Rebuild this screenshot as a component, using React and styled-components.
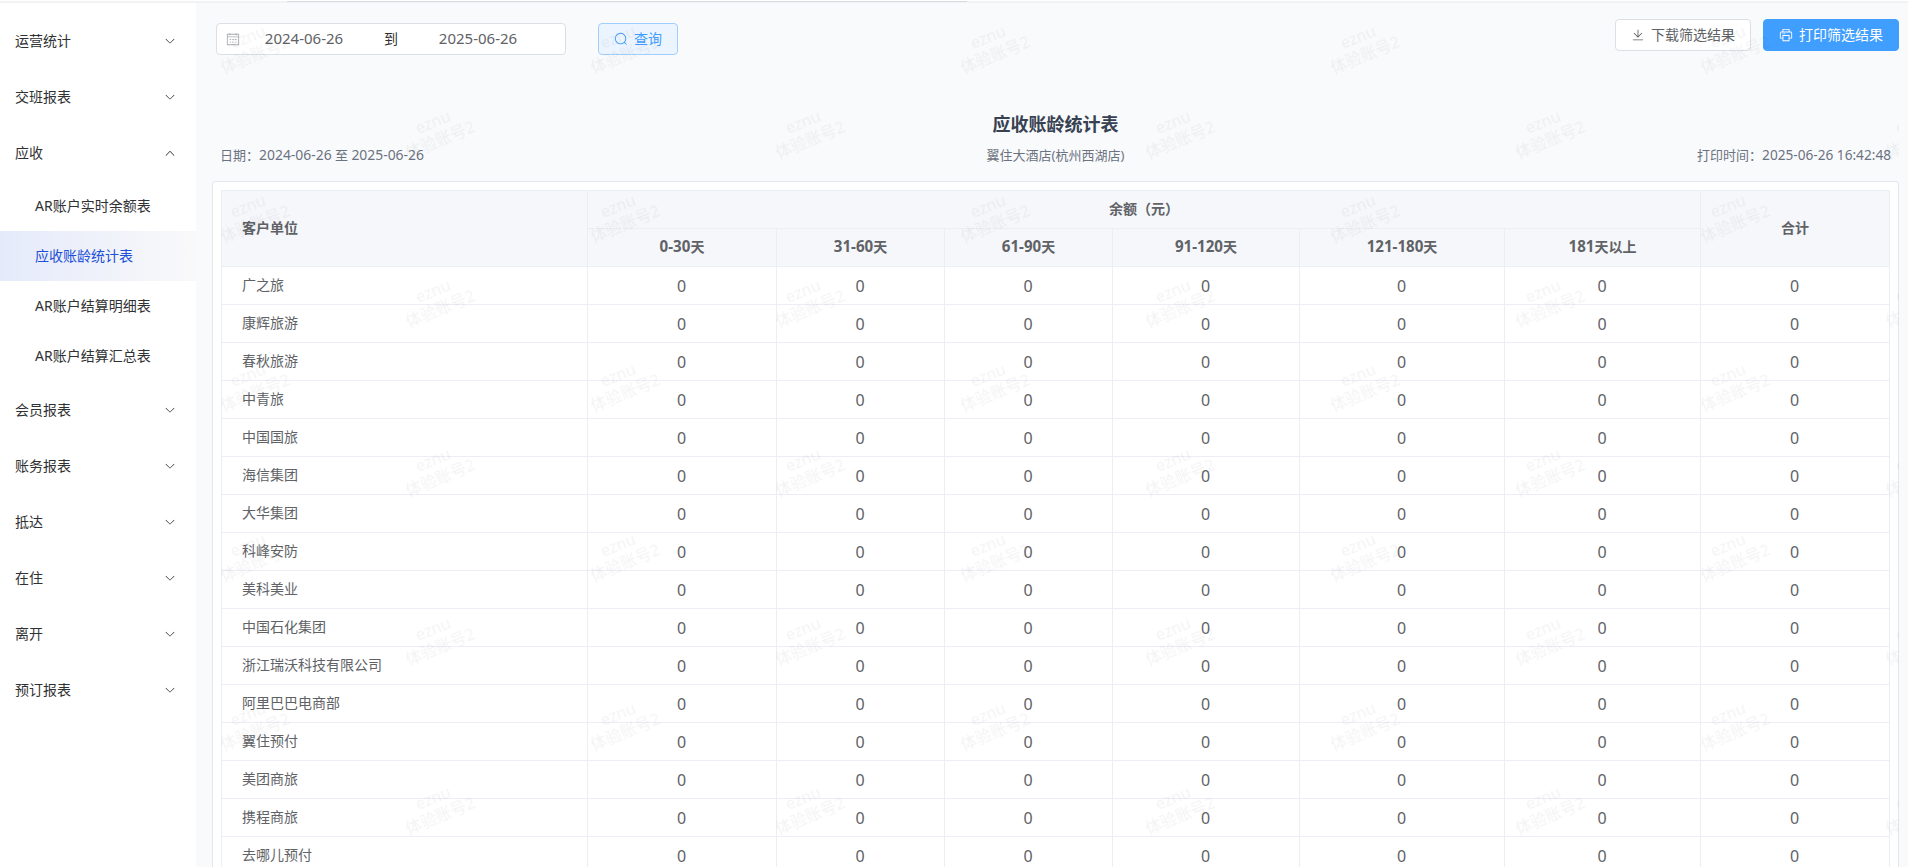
import React from 'react';
import styled, { createGlobalStyle } from 'styled-components';

const GlobalStyle = createGlobalStyle`
  * { box-sizing: border-box; }
  body { margin: 0; background: #f9fafc; overflow: hidden; font-family: 'Noto Sans', 'Noto Sans CJK SC', sans-serif; font-size: 14px; color: #303133; }
  button { font-family: inherit; }
`;

const TopStrip = styled.div` height: 3px; padding: 1px 0 0 287px; background: linear-gradient(#ffffff 1px, #f2f3f5 1px); `;
const ScrollThumb = styled.div` width: 680px; height: 1px; background: #d9dbe0; `;
const Layout = styled.div` display: flex; height: 864px; `;

const Sidebar = styled.nav` width: 196px; flex-shrink: 0; background: #fff; padding-top: 10px; `;
const MenuTitle = styled.div` display: flex; align-items: center; justify-content: space-between; height: 56px; padding: 0 20px 0 15px; color: #303133; `;
const MenuName = styled.span` padding-bottom: 2px; `;
const SubMenu = styled.div` padding-bottom: 1px; `;
const MenuItem = styled.div`
  height: 50px; line-height: 50px; padding-left: 35px;
  color: ${p => p.$active ? '#1d4fd8' : '#303133'};
  background: ${p => p.$active ? 'linear-gradient(90deg, #e5eafb, #f9f9f9)' : 'none'};
`;

const Main = styled.main` position: relative; flex: 1; min-width: 0; padding: 16px 9px 0 16px; display: flex; flex-direction: column; overflow: hidden; `;
const Toolbar = styled.div` display: flex; align-items: flex-start; height: 84px; padding-left: 4px; `;
const DateRange = styled.div` display: flex; align-items: center; width: 350px; height: 32px; margin: 4px 32px 0 0; padding: 0 18px 0 9px; background: #fff; border: 1px solid #dcdfe6; border-radius: 4px; color: #606266; `;
const DateValue = styled.span` width: ${p => p.$width}px; padding: 0 0 2px; text-align: center; font-size: 15px; `;
const DateSeparator = styled.span` flex: 1; padding: 0 0 2px 5px; text-align: center; color: #303133; `;
const Button = styled.button`
  display: flex; align-items: center; justify-content: center; gap: 6px;
  width: ${p => p.$width}px; height: 32px; margin-top: ${p => p.$top || 0}px; padding: 0; border-radius: 4px; font-size: 14px;
  color: ${p => p.$color || '#606266'}; background: ${p => p.$bg || '#fff'}; border: 1px solid ${p => p.$border || '#dcdfe6'};
`;
const ButtonText = styled.span` padding-bottom: 2px; `;
const Actions = styled.div` display: flex; gap: 12px; margin-left: auto; `;

const Title = styled.h1` margin: 8px 0 0; height: 26px; line-height: 26px; text-align: center; font-size: 18px; font-weight: 700; color: #374151; `;
const Meta = styled.div` display: grid; grid-template-columns: 1fr auto 1fr; height: 44px; padding: 8px 8px 0 8px; line-height: 20px; font-size: 13px; color: #6b7280; `;
const PrintTime = styled.span` text-align: right; `;
const Num = styled.span` font-size: ${p => p.$scale || 1.07}em; line-height: 1; `;
const Card = styled.section` flex: 1; min-height: 0; padding: 8px; background: #fff; border: 1px solid #e4e7ed; border-bottom: 0; border-radius: 4px 4px 0 0; overflow: hidden; `;

const Table = styled.table` width: 1669px; table-layout: fixed; border-collapse: separate; border-spacing: 0; border-top: 1px solid #ebeef5; border-left: 1px solid #ebeef5; color: #606266; `;
const Cell = styled.td` height: 38px; padding: 0 20px 2px; text-align: ${p => p.$left ? 'left' : 'center'}; line-height: 22px; border-right: 1px solid #ebeef5; border-bottom: 1px solid #ebeef5; `;
const HeadCell = styled(Cell)` background: #f5f7fb; font-weight: 700; `;
const AmountCell = styled(Cell)` padding: 0 21px 0 20px; font-size: 16px; `;

const WatermarkLayer = styled.div` position: absolute; top: 0; bottom: 0; left: 16px; right: 9px; overflow: hidden; pointer-events: none; `;
const Watermark = styled.div` position: absolute; width: 100px; height: 40px; text-align: center; font-size: 16px; font-weight: 500; line-height: 19px; color: rgba(0, 0, 0, 0.042); transform: rotate(-22deg); will-change: transform; `;

const menus = [
  { name: '运营统计' },
  { name: '交班报表' },
  { name: '应收', children: ['AR账户实时余额表', '应收账龄统计表', 'AR账户结算明细表', 'AR账户结算汇总表'] },
  { name: '会员报表' },
  { name: '账务报表' },
  { name: '抵达' },
  { name: '在住' },
  { name: '离开' },
  { name: '预订报表' },
];
const ranges = [['0-30', '天'], ['31-60', '天'], ['61-90', '天'], ['91-120', '天'], ['121-180', '天'], ['181', '天以上']];
const columnWidths = [366, 189, 168, 168, 187, 205, 196, 189];
const customers = ['广之旅', '康辉旅游', '春秋旅游', '中青旅', '中国国旅', '海信集团', '大华集团', '科峰安防', '美科美业', '中国石化集团', '浙江瑞沃科技有限公司', '阿里巴巴电商部', '翼住预付', '美团商旅', '携程商旅', '去哪儿预付'];

// odd rows of the watermark are shifted by half a tile
const watermarks = [];
for (let row = 0; row < 10; row++) {
  for (let col = 0; col < 5; col++) {
    watermarks.push({ x: -10 + col * 370 + (row % 2) * 185, y: Math.round(24 + row * 84.6) });
  }
}

const Icon = ({ size = 14, children }) => (
  <svg width={size} height={size} viewBox="0 0 1024 1024" fill="currentColor">{children}</svg>
);
const ChevronIcon = ({ up }) => (
  <Icon size={12}>
    <path d={up
      ? 'm488.8 344.3-339.8 356.7a32 32 0 0 0 0 44.2l.4.4a29.4 29.4 0 0 0 42.7 0L512 409.8l319.9 335.8a29.4 29.4 0 0 0 42.7 0l.4-.4a32 32 0 0 0 0-44.2L535.2 344.3a32 32 0 0 0-46.4 0z'
      : 'M831.9 340.9 512 652.7 192.1 340.9a30.6 30.6 0 0 0-42.7 0 29.1 29.1 0 0 0 0 41.6L489.7 714.2a32 32 0 0 0 44.6 0l340.3-331.7a29.1 29.1 0 0 0 0-41.7 30.6 30.6 0 0 0-42.7 0z'} />
  </Icon>
);
const CalendarIcon = () => (
  <Icon><path fill="#a8abb2" d="M128 384v512h768V192H768v32a32 32 0 1 1-64 0v-32H320v32a32 32 0 0 1-64 0v-32H128v128h768v64H128zm192-256h384V96a32 32 0 1 1 64 0v32h160a32 32 0 0 1 32 32v768a32 32 0 0 1-32 32H96a32 32 0 0 1-32-32V160a32 32 0 0 1 32-32h160V96a32 32 0 0 1 64 0v32zm-32 384h64a32 32 0 0 1 0 64h-64a32 32 0 0 1 0-64zm0 192h64a32 32 0 1 1 0 64h-64a32 32 0 1 1 0-64zm192-192h64a32 32 0 0 1 0 64h-64a32 32 0 0 1 0-64zm0 192h64a32 32 0 1 1 0 64h-64a32 32 0 1 1 0-64zm192-192h64a32 32 0 1 1 0 64h-64a32 32 0 1 1 0-64zm0 192h64a32 32 0 1 1 0 64h-64a32 32 0 1 1 0-64z" /></Icon>
);
const SearchIcon = () => (
  <Icon><path d="m795.9 750.7 124.992 124.928a32 32 0 0 1-45.248 45.248L750.656 795.904a416 416 0 1 1 45.248-45.248zM480 832a352 352 0 1 0 0-704 352 352 0 0 0 0 704z" /></Icon>
);
const DownloadIcon = () => (
  <Icon><path d="M160 832h704a32 32 0 1 1 0 64H160a32 32 0 1 1 0-64zm384-253.696 236.288-236.352 45.248 45.248L508.8 704 192 387.2l45.248-45.248L480 584.704V128h64v450.304z" /></Icon>
);
const PrinterIcon = () => (
  <Icon><path d="M256 768H105c-15 0-20-1-26-4-5-3-9-7-11-11-3-6-4-11-4-26V379c0-42 4-58 13-73 8-16 20-28 36-36 15-9 30-14 73-14h70V64h512v192h70c43 0 58 5 73 14 16 8 28 20 36 36 9 15 13 31 13 73v348c0 15-1 20-4 26-2 4-6 8-11 11-6 3-11 4-26 4H768v192H256V768zm64-192v320h384V576H320zm-64 128V512h512v192h128V379c0-29-2-36-5-43-3-5-6-9-12-12-7-3-14-4-43-4H186c-29 0-36 1-43 4-6 3-9 7-12 12-3 7-3 14-3 43v325h128zm64-448h384V128H320v128zm-64 128h64v64h-64v-64zm128 0h64v64h-64v-64z" /></Icon>
);

const App = () => (
  <>
    <GlobalStyle />
    <TopStrip><ScrollThumb /></TopStrip>
    <Layout>
      <Sidebar>
        {menus.map(menu => (
          <React.Fragment key={menu.name}>
            <MenuTitle><MenuName>{menu.name}</MenuName><ChevronIcon up={!!menu.children} /></MenuTitle>
            {menu.children && (
              <SubMenu>
                {menu.children.map(item => <MenuItem key={item} $active={item === '应收账龄统计表'}>{item}</MenuItem>)}
              </SubMenu>
            )}
          </React.Fragment>
        ))}
      </Sidebar>
      <Main>
        <Toolbar>
          <DateRange>
            <CalendarIcon />
            <DateValue $width={128}>2024-06-26</DateValue>
            <DateSeparator>到</DateSeparator>
            <DateValue $width={138}>2025-06-26</DateValue>
          </DateRange>
          <Button $width={80} $top={4} $color="#409eff" $bg="#ecf5ff" $border="#a0cfff"><SearchIcon /><ButtonText>查询</ButtonText></Button>
          <Actions>
            <Button $width={136}><DownloadIcon /><ButtonText>下载筛选结果</ButtonText></Button>
            <Button $width={136} $color="#fff" $bg="#409eff" $border="#409eff"><PrinterIcon /><ButtonText>打印筛选结果</ButtonText></Button>
          </Actions>
        </Toolbar>
        <Title>应收账龄统计表</Title>
        <Meta>
          <span>日期：<Num>2024-06-26</Num> 至 <Num>2025-06-26</Num></span>
          <span>翼住大酒店(杭州西湖店)</span>
          <PrintTime>打印时间：<Num $scale={1.05}>2025-06-26 16:42:48</Num></PrintTime>
        </Meta>
        <Card>
          <Table>
            <colgroup>{columnWidths.map((width, i) => <col key={i} width={width} />)}</colgroup>
            <thead>
              <tr>
                <HeadCell as="th" rowSpan={2} $left>客户单位</HeadCell>
                <HeadCell as="th" colSpan={6}>余额（元）</HeadCell>
                <HeadCell as="th" rowSpan={2}>合计</HeadCell>
              </tr>
              <tr>{ranges.map(([days, unit]) => <HeadCell as="th" key={days}><Num $scale={1.08}>{days}</Num>{unit}</HeadCell>)}</tr>
            </thead>
            <tbody>
              {customers.map(name => (
                <tr key={name}>
                  <Cell $left>{name}</Cell>
                  {ranges.map(([days]) => <AmountCell key={days}>0</AmountCell>)}
                  <AmountCell>0</AmountCell>
                </tr>
              ))}
            </tbody>
          </Table>
        </Card>
        <WatermarkLayer>
          {watermarks.map(({ x, y }) => (
            <Watermark key={`${x}-${y}`} style={{ left: x, top: y }}>eznu<br />体验账号2</Watermark>
          ))}
        </WatermarkLayer>
      </Main>
    </Layout>
  </>
);

export default App;
